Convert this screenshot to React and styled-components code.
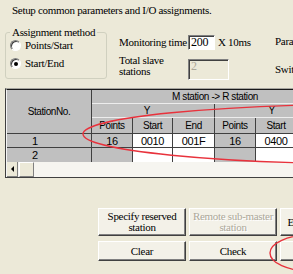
import React from 'react'
import styled, { createGlobalStyle } from 'styled-components'

const GlobalStyle = createGlobalStyle`
  html, body {
    margin: 0;
    padding: 0;
    background: #ece9d8;
  }
  body {
    overflow: hidden;
  }
`

const Page = styled.div`
  position: relative;
  width: 293px;
  height: 274px;
  overflow: hidden;
  background: #ece9d8;
  font-family: 'Liberation Serif', 'Times New Roman', serif;
  font-size: 11px;
  letter-spacing: -0.3px;
  color: #000;
`

const Dialog = styled.div`
  width: 420px;
  padding-top: 4px;
`

const Intro = styled.div`
  padding-left: 12px;
  height: 13px;
  line-height: 13px;
  white-space: nowrap;
`

const TopRow = styled.div`
  display: flex;
  height: 54px;
  margin-top: 9px;
`

const Group = styled.fieldset`
  box-sizing: border-box;
  width: 102px;
  height: 53px;
  margin: 0 0 0 5px;
  padding: 1px 0 0 4px;
  border: 1px solid #d0d0bf;
  border-radius: 3px;
`

const Legend = styled.legend`
  padding: 0 2px;
  line-height: 13px;
`

const RadioRow = styled.label`
  display: flex;
  align-items: center;
  gap: 4px;
  height: 11px;
  line-height: 11px;

  & + & {
    margin-top: 7px;
  }
`

const Radio = styled.span`
  box-sizing: border-box;
  width: 11px;
  height: 11px;
  border-radius: 50%;
  background: #fff;
  border: 1px solid;
  border-color: #808080 #fff #fff #808080;
  box-shadow: inset 1px 1px #404040;
  display: flex;
  align-items: center;
  justify-content: center;

  &::after {
    content: '';
    display: ${p => (p.$checked ? 'block' : 'none')};
    width: 4px;
    height: 4px;
    border-radius: 50%;
    background: #000;
  }
`

const Params = styled.div`
  width: 156px;
  margin-left: 12px;
  padding-top: 9px;
`

const ParamRow = styled.div`
  display: flex;
  align-items: ${p => (p.$top ? 'flex-start' : 'center')};
  min-height: 15px;
  margin-top: ${p => p.$gap || 0}px;
`

const ParamLabel = styled.div`
  width: 69px;
  line-height: ${p => (p.$tight ? 11 : 13)}px;
`

const TextBox = styled.div`
  box-sizing: border-box;
  width: ${p => p.$w}px;
  height: ${p => p.$h}px;
  margin-top: ${p => p.$offset || 0}px;
  padding: 0 1px 0 2px;
  line-height: 13px;
  font-size: 12px;
  background: ${p => (p.$disabled ? '#ece9d8' : '#fff')};
  color: ${p => (p.$disabled ? '#aca899' : '#000')};
  border: 1px solid;
  border-color: #808080 #fff #fff #808080;
  box-shadow: inset 1px 1px #404040;
`

const Unit = styled.span`
  margin-left: 3px;
  line-height: 13px;
`

const SideCol = styled.div`
  padding-top: 9px;
  line-height: 13px;
`

const SideItem = styled.div`
  margin-top: ${p => p.$gap || 0}px;
`

const Frame = styled.div`
  width: 400px;
  margin: 8px 0 0 5px;
  border-top: 1px solid #a7a6a0;
  border-left: 1px solid #404040;
  border-bottom: 1px solid #404040;
`

const Inner = styled.div`
  border-top: 1px solid #1a1a1a;
  border-left: 1px solid #f4f4f4;
  background: #f6f5f0;
`

const Table = styled.table`
  table-layout: fixed;
  border-collapse: separate;
  border-spacing: 0;
  width: 332px;
  font-family: 'Liberation Sans', Arial, sans-serif;
  font-size: 10px;
  letter-spacing: -0.4px;
`

const Col = styled.col`
  width: ${p => p.$w}px;
`

const Head = styled.th`
  box-sizing: border-box;
  height: ${p => p.$h}px;
  padding: 0 ${p => p.$shift || 0}px 0 0;
  font-weight: normal;
  text-align: center;
  white-space: nowrap;
  overflow: hidden;
  background: #c0c0c0;
  border-right: 1px solid #404040;
  border-bottom: 1px solid ${p => (p.$soft ? '#ededed' : '#404040')};
  line-height: 10px;
`

const Cell = styled.td`
  box-sizing: border-box;
  height: 14px;
  padding: 0 0 0 ${p => p.$indent || 0}px;
  text-align: ${p => (p.$indent ? 'left' : 'center')};
  white-space: nowrap;
  overflow: hidden;
  font-size: 11px;
  line-height: 12px;
  background: ${p => (p.$fixed ? '#c0c0c0' : '#fff')};
  border-right: 1px solid #404040;
  border-bottom: ${p => (p.$last ? 'none' : '1px solid #404040')};
`

const ScrollBar = styled.div`
  display: flex;
  height: 15px;
  background: #f6f5f0;
`

const ArrowBtn = styled.div`
  box-sizing: border-box;
  width: 11px;
  height: 15px;
  background: #ece9d8;
  border-right: 1px solid #808080;
  border-bottom: 1px solid #808080;
  display: flex;
  align-items: center;
  justify-content: center;

  &::before {
    content: '';
    border-style: solid;
    border-width: 3px 3px 3px 0;
    border-color: transparent #000 transparent transparent;
  }
`

const Thumb = styled.div`
  box-sizing: border-box;
  width: 15px;
  height: 15px;
  margin-left: 1px;
  background: #ece9d8;
  border-left: 1px solid #fff;
  border-top: 1px solid #fff;
  border-right: 1px solid #808080;
  border-bottom: 1px solid #808080;
`

const Buttons = styled.div`
  display: grid;
  grid-template-columns: 88px 88px 88px;
  grid-template-rows: 28px 20px;
  column-gap: 3px;
  row-gap: 5px;
  margin: 30px 0 0 98px;
`

const Button = styled.button`
  box-sizing: border-box;
  margin: 0;
  padding: 0 2px;
  font-family: inherit;
  font-size: 11px;
  letter-spacing: -0.3px;
  line-height: 11px;
  white-space: ${p => (p.$nowrap ? 'nowrap' : 'normal')};
  overflow: hidden;
  color: #000;
  background: #f3f1e8;
  border: 1px solid;
  border-color: #fff #404040 #404040 #fff;
  box-shadow: inset -1px -1px #808080;

  &:disabled {
    color: #aca899;
    text-shadow: 1px 1px #fff;
  }
`

const Overlay = styled.svg`
  position: absolute;
  top: 0;
  left: 0;
  pointer-events: none;
`

const widths = [85, 41, 40, 42, 41, 41, 42]
const subHeads = ['Points', 'Start', 'End', 'Points', 'Start', 'End']
const rows = [
  ['1', '16', '0010', '001F', '16', '0400', '040F'],
  ['2', '', '', '', '', '', '']
]

const App = () => (
  <Page>
    <GlobalStyle />
    <Dialog>
      <Intro>Setup common parameters and I/O assignments.</Intro>

      <TopRow>
        <Group>
          <Legend>Assignment method</Legend>
          <RadioRow>
            <Radio />
            Points/Start
          </RadioRow>
          <RadioRow>
            <Radio $checked />
            Start/End
          </RadioRow>
        </Group>

        <Params>
          <ParamRow>
            <ParamLabel>Monitoring time</ParamLabel>
            <TextBox $w={27} $h={15}>200</TextBox>
            <Unit>X 10ms</Unit>
          </ParamRow>
          <ParamRow $top $gap={5}>
            <ParamLabel $tight>
              Total slave
              <br />
              stations
            </ParamLabel>
            <TextBox $w={41} $h={21} $offset={4} $disabled>
              2
            </TextBox>
          </ParamRow>
        </Params>

        <SideCol>
          <SideItem>Parameter</SideItem>
          <SideItem $gap={15}>Switch</SideItem>
        </SideCol>
      </TopRow>

      <Frame>
        <Inner>
          <Table>
            <colgroup>
              {widths.map((w, i) => (
                <Col key={i} $w={w} />
              ))}
            </colgroup>
            <thead>
              <tr>
                <Head rowSpan={3} $h={44}>
                  StationNo.
                </Head>
                <Head colSpan={6} $h={14} $soft>
                  M station -&gt; R station
                </Head>
              </tr>
              <tr>
                <Head colSpan={3} $h={14} $soft $shift={12}>
                  Y
                </Head>
                <Head colSpan={3} $h={14} $soft $shift={10}>
                  Y
                </Head>
              </tr>
              <tr>
                {subHeads.map((h, i) => (
                  <Head key={i} $h={16}>
                    {h}
                  </Head>
                ))}
              </tr>
            </thead>
            <tbody>
              {rows.map((r, ri) => (
                <tr key={ri}>
                  {r.map((v, ci) => (
                    <Cell
                      key={ci}
                      $fixed={ci === 0 || ci === 1 || ci === 4}
                      $indent={ci === 0 ? 25 : 0}
                      $last={ri === rows.length - 1}
                    >
                      {v}
                    </Cell>
                  ))}
                </tr>
              ))}
            </tbody>
          </Table>
          <ScrollBar>
            <ArrowBtn />
            <Thumb />
          </ScrollBar>
        </Inner>
      </Frame>

      <Buttons>
        <Button>
          Specify reserved
          <br />
          station
        </Button>
        <Button disabled>
          Remote sub-master
          <br />
          station
        </Button>
        <Button $nowrap>Equal assignment</Button>
        <Button>Clear</Button>
        <Button>Check</Button>
        <Button>End</Button>
      </Buttons>
    </Dialog>

    <Overlay width="293" height="274" viewBox="0 0 293 274">
      <ellipse cx="385" cy="134" rx="302" ry="30" fill="none" stroke="#e8323c" strokeWidth="1.4" />
      <ellipse cx="310" cy="253" rx="40" ry="18" fill="none" stroke="#e8323c" strokeWidth="1.4" />
    </Overlay>
  </Page>
)

export default App
